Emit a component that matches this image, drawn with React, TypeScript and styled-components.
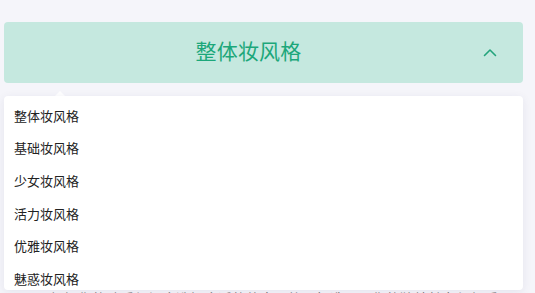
import * as React from "react"
import styled, { createGlobalStyle } from "styled-components"

const Global = createGlobalStyle`
  html, body {
    margin: 0;
    padding: 0;
    background: #f5f5fa;
    font-family: "Noto Sans CJK SC", "Noto Sans", sans-serif;
    overflow: hidden;
  }
`

const Page = styled.div`
  position: relative;
  padding: 22px 12px 0 4px;
  height: 293px;
  box-sizing: border-box;
  overflow: hidden;
`

const Header = styled.button`
  display: flex;
  align-items: center;
  width: 100%;
  height: 61px;
  padding: 0 20px 5px 16px;
  border: none;
  border-radius: 4px;
  background: #c5e8df;
  font-family: inherit;
  cursor: pointer;
`

const Title = styled.span`
  flex: 1;
  text-align: center;
  font-size: 21px;
  line-height: 1;
  color: #1ca77a;
  letter-spacing: 0.2px;
`

const Chevron = styled.span`
  display: flex;
  justify-content: center;
  width: 26px;
  margin-top: 5px;
  color: #23a47c;
`

const Behind = styled.p`
  margin: 205px 0 0 46px;
  font-size: 14px;
  line-height: 20px;
  color: #777;
  white-space: nowrap;
`

const Menu = styled.div`
  position: absolute;
  top: 96px;
  left: 4px;
  right: 12px;
  height: 194px;
  background: #fff;
  border-radius: 4px;
  box-shadow: 0 2px 10px rgba(40, 40, 90, 0.08);
  overflow: hidden;
  padding-top: 3px;
  box-sizing: border-box;
`

const Arrow = styled.span`
  position: absolute;
  top: 91px;
  left: 54px;
  width: 0;
  height: 0;
  border-left: 6px solid transparent;
  border-right: 6px solid transparent;
  border-bottom: 6px solid #fff;
`

const Item = styled.div`
  height: 32.6px;
  display: flex;
  align-items: center;
  padding-left: 10px;
  font-size: 13px;
  color: #222;
`

const options = ["整体妆风格", "基础妆风格", "少女妆风格", "活力妆风格", "优雅妆风格", "魅惑妆风格"]

const App: React.FunctionComponent = () => {
  const [open, setOpen] = React.useState(true)

  return (
    <>
      <Global />
      <Page>
        <Header onClick={() => setOpen(!open)}>
          <Title>整体妆风格</Title>
          <Chevron>
            <svg width="14" height="9" viewBox="0 0 14 9" fill="none">
              <path d="M1.5 7.5 L7 2 L12.5 7.5" stroke="currentColor" strokeWidth="1.6" strokeLinecap="round" strokeLinejoin="round" />
            </svg>
          </Chevron>
        </Header>
        <Behind>根据你的肤质与场合选择合适的妆容风格，打造属于你的独特魅力与气质</Behind>
        {open && (
          <>
            <Arrow />
            <Menu>
              {options.map((o) => (
                <Item key={o}>{o}</Item>
              ))}
            </Menu>
          </>
        )}
      </Page>
    </>
  )
}

export default App
